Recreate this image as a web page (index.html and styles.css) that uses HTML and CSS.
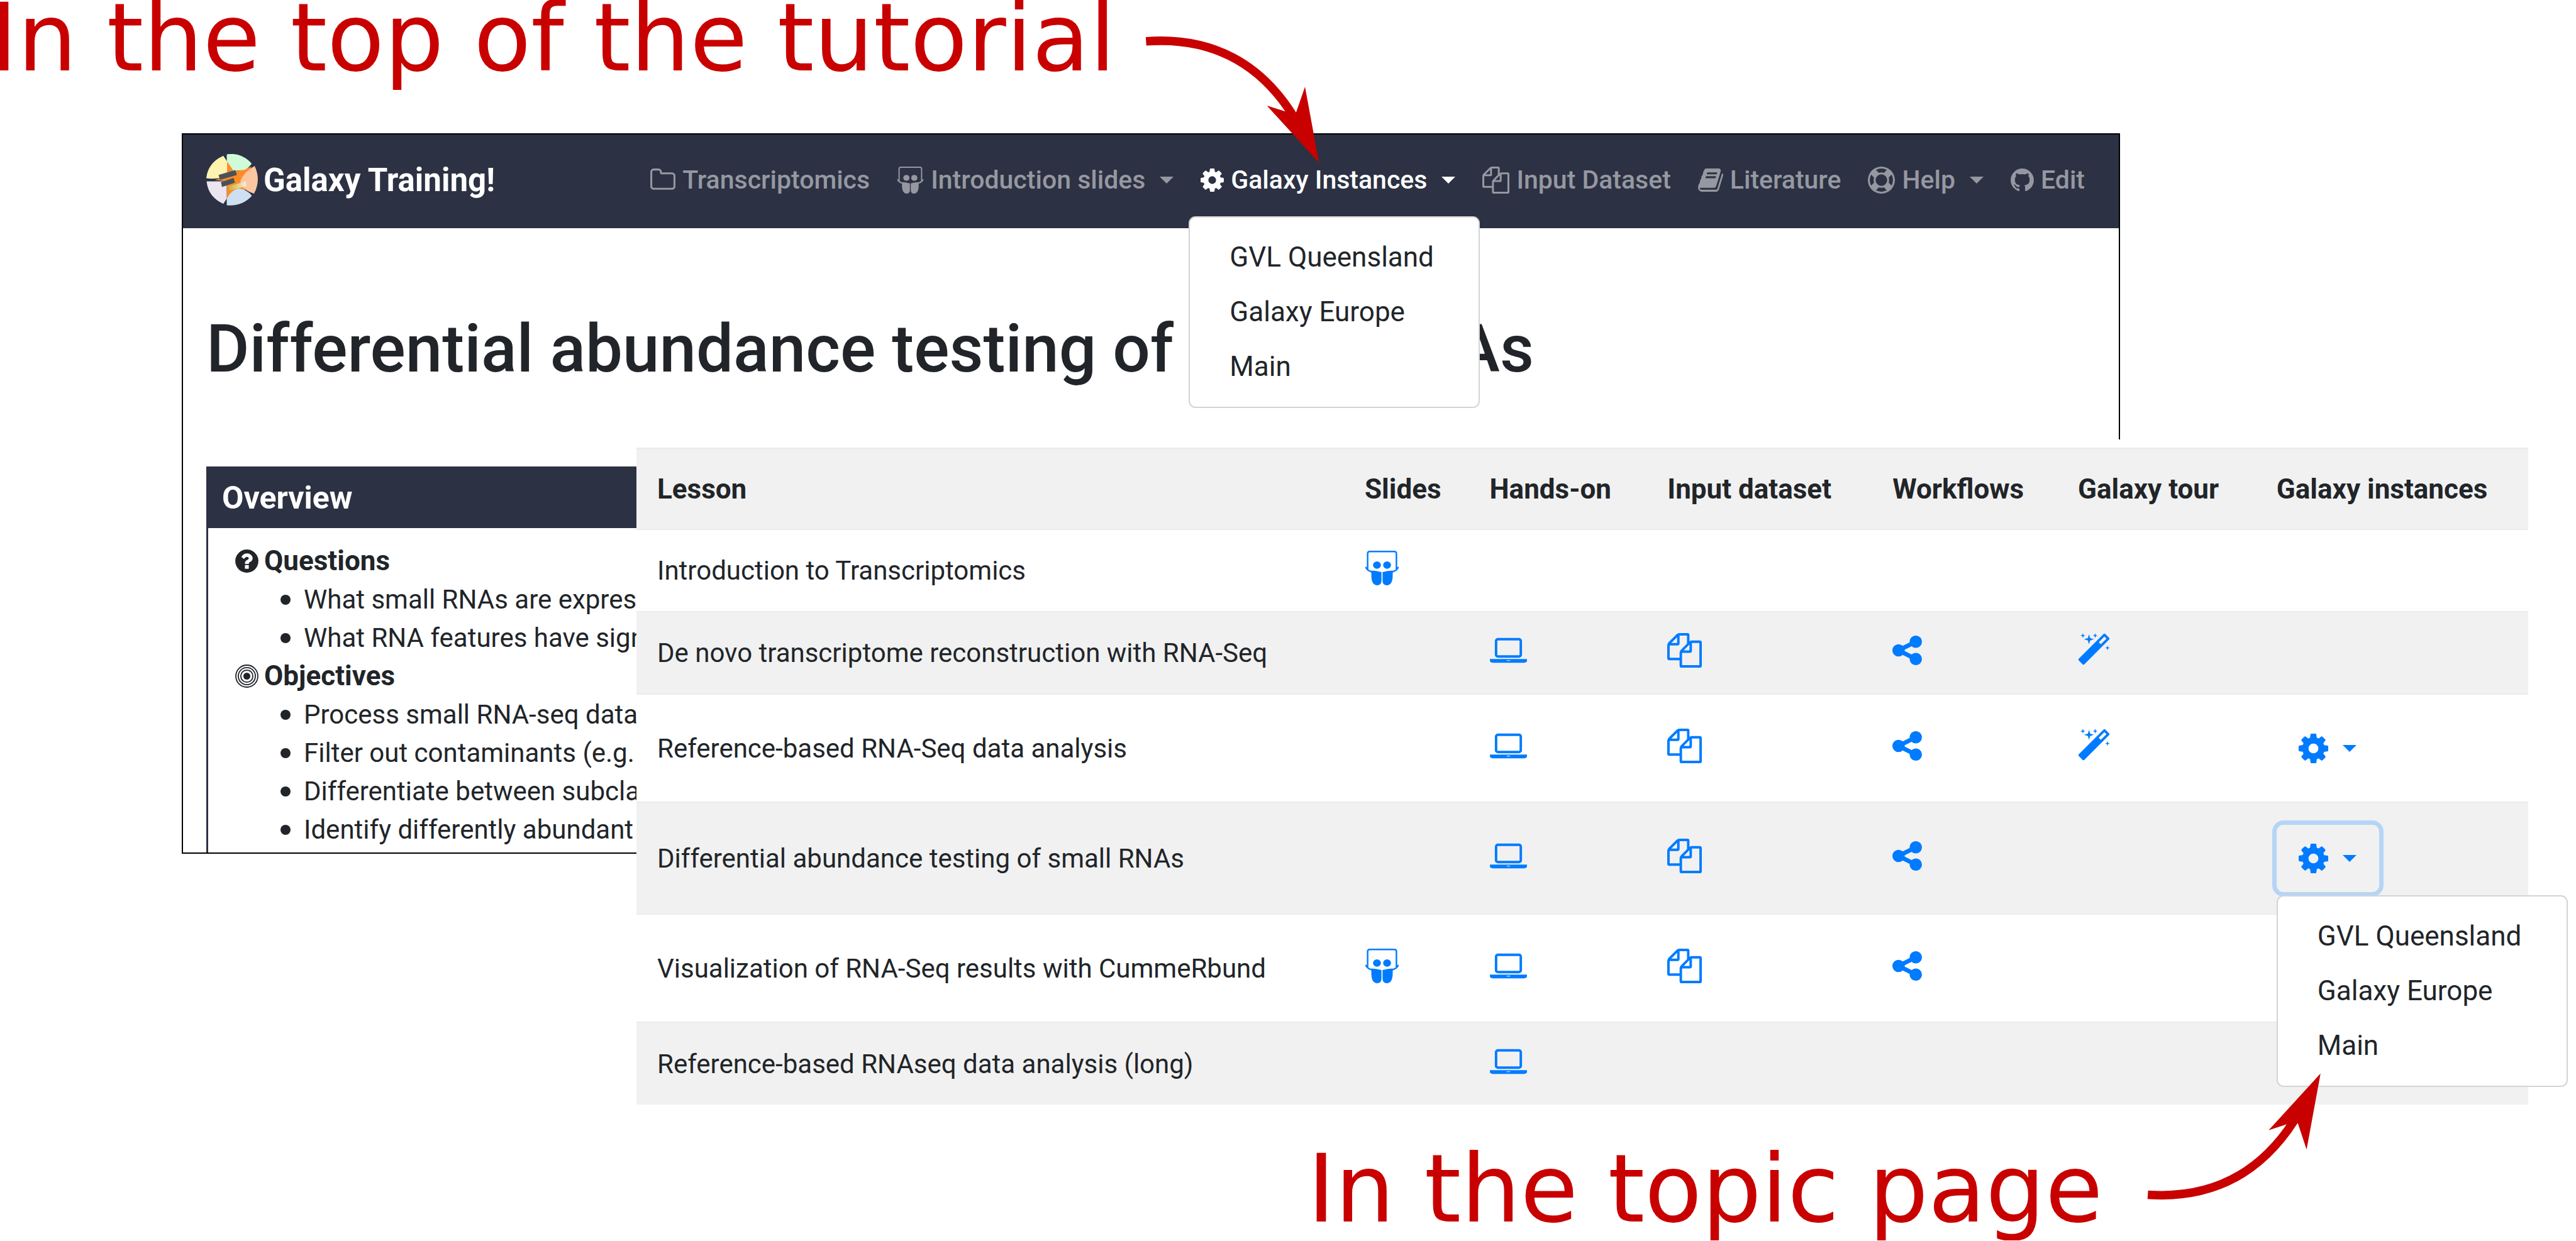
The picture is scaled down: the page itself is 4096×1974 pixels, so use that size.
FILE: index.html
```html
<!DOCTYPE html>
<html lang="en">
<head>
<meta charset="utf-8">
<title>Galaxy Training! – Galaxy instances</title>
<link rel="stylesheet" href="styles.css">
</head>
<body>
<svg class="sprite" aria-hidden="true">
  <symbol id="cog" viewBox="128 0 1536 1792"><path d="M1152 896q0-106-75-181t-181-75-181 75-75 181 75 181 181 75 181-75 75-181zm512-109v222q0 12-8 23t-20 13l-185 28q-19 54-39 91 35 50 107 138 10 12 10 25t-9 23q-27 37-99 108t-94 71q-12 0-26-9l-138-108q-44 23-91 38-16 136-29 186-7 28-36 28h-222q-14 0-24.5-8.5t-11.5-21.5l-28-184q-49-16-90-37l-141 107q-10 9-25 9-14 0-25-11-126-114-165-168-7-10-7-23 0-12 8-23 15-21 51-66.5t54-70.5q-27-50-41-99l-183-27q-13-2-21-12.5t-8-23.5v-222q0-12 8-23t19-13l186-28q14-46 39-92-40-57-107-138-10-12-10-24 0-10 9-23 26-36 98.5-107.5t94.5-71.5q13 0 26 10l138 107q44-23 91-38 16-136 29-186 7-28 36-28h222q14 0 24.5 8.5t11.5 21.5l28 184q49 16 90 37l142-107q9-9 24-9 13 0 25 10 129 119 165 170 7 8 7 22 0 12-8 23-15 21-51 66.5t-54 70.5q26 50 41 98l183 28q13 2 21 12.5t8 23.5z"/></symbol>
  <symbol id="folder" viewBox="64 0 1664 1792"><path d="M1600 1312v-704q0-40-28-68t-68-28h-704q-40 0-68-28t-28-68v-64q0-40-28-68t-68-28h-320q-40 0-68 28t-28 68v960q0 40 28 68t68 28h1216q40 0 68-28t28-68zm128-704v704q0 92-66 158t-158 66h-1216q-92 0-158-66t-66-158v-960q0-92 66-158t158-66h320q92 0 158 66t66 158v32h672q92 0 158 66t66 158z"/></symbol>
  <symbol id="files" viewBox="0 0 1792 1792"><path d="M1696 384q40 0 68 28t28 68v1216q0 40-28 68t-68 28h-960q-40 0-68-28t-28-68v-288h-544q-40 0-68-28t-28-68v-672q0-40 20-88t48-76l408-408q28-28 76-48t88-20h416q40 0 68 28t28 68v328q68-40 128-40h416zm-544 213l-299 299h299v-299zm-640-384l-299 299h299v-299zm196 647l316-316v-416h-384v416q0 40-28 68t-68 28h-416v640h512v-256q0-40 20-88t48-76zm956 804v-1152h-384v416q0 40-28 68t-68 28h-416v640h896z"/></symbol>
  <symbol id="book" viewBox="64 0 1664 1792"><path d="M1703 478q40 57 18 129l-275 906q-19 64-76.5 107.5t-122.5 43.5h-923q-77 0-148.5-53.5t-99.5-131.5q-24-67-2-127 0-4 3-27t4-37q1-8-3-21.5t-3-19.5q2-11 8-21t16.5-23.5 16.5-23.5q23-38 45-91.5t30-91.5q3-10 .5-30t-.5-28q3-11 17-28t17-23q21-36 42-92t25-90q1-9-2.5-32t.5-28q4-13 22-30.5t22-22.5q19-26 42.5-84.5t27.5-96.5q1-8-3-25.5t-2-26.5q2-8 9-18t18-23 17-21q8-12 16.5-30.5t15-35 16-36 19.5-32 26.5-23.5 36-11.5 47.5 5.5l-1 3q38-9 51-9h761q74 0 114 56t18 130l-274 906q-36 119-71.5 153.5t-128.5 34.5h-869q-27 0-38 15-11 16-1 43 24 70 144 70h923q29 0 56-15.5t35-41.5l300-987q7-22 5-57 38 15 59 43zm-1064 2q-4 13 2 22.5t20 9.5h608q13 0 25.5-9.5t16.5-22.5l21-64q4-13-2-22.5t-20-9.5h-608q-13 0-25.5 9.5t-16.5 22.5zm-83 256q-4 13 2 22.5t20 9.5h608q13 0 25.5-9.5t16.5-22.5l21-64q4-13-2-22.5t-20-9.5h-608q-13 0-25.5 9.5t-16.5 22.5z"/></symbol>
  <symbol id="ring" viewBox="0 0 1792 1792"><path fill-rule="evenodd" d="M896 0q182 0 348 71t286 191 191 286 71 348-71 348-191 286-286 191-348 71-348-71-286-191-191-286-71-348 71-348 191-286 286-191 348-71zm0 128q-190 0-361 90l194 194q82-28 167-28t167 28l194-194q-171-90-361-90zm-678 1129l194-194q-28-82-28-167t28-167l-194-194q-90 171-90 361t90 361zm678 407q190 0 361-90l-194-194q-82 28-167 28t-167-28l-194 194q171 90 361 90zm0-384q159 0 271.5-112.5t112.5-271.5-112.5-271.5-271.5-112.5-271.5 112.5-112.5 271.5 112.5 271.5 271.5 112.5zm484-217l194 194q90-171 90-361t-90-361l-194 194q28 82 28 167t-28 167z"/></symbol>
  <symbol id="github" viewBox="128 0 1536 1792"><path d="M896 128q209 0 385.5 103t279.5 279.5 103 385.5q0 251-146.5 451.5t-378.5 277.5q-27 5-40-7t-13-30q0-3 .5-76.5t.5-134.5q0-97-52-142 57-6 102.5-18t94-39 81-66.5 53-105 20.5-150.5q0-119-79-206 37-91-8-204-28-9-81 11t-92 44l-38 24q-93-26-192-26t-192 26q-16-11-42.5-27t-83.5-38.5-85-13.5q-45 113-8 204-79 87-79 206 0 85 20.5 150t52.5 105 80.5 67 94 39 102.5 18q-39 36-49 103-21 10-45 15t-57 5-65.5-21.5-55.5-62.5q-19-32-48.5-52t-49.5-24l-20-3q-21 0-29 4.5t-5 11.5 9 14 13 12l7 5q22 10 43.5 38t31.5 51l10 23q13 38 44 61.5t67 30 69.5 7 55.5-3.5l23-4q0 38 .5 88.5t.5 54.5q0 18-13 30t-40 7q-232-77-378.5-277.5t-146.5-451.5q0-209 103-385.5t279.5-279.5 385.5-103z"/></symbol>
  <symbol id="share" viewBox="128 0 1536 1792"><path d="M1344 1024q133 0 226.5 93.5t93.5 226.5-93.5 226.5-226.5 93.5-226.5-93.5-93.5-226.5q0-12 2-34l-360-180q-92 86-218 86-133 0-226.5-93.5t-93.5-226.5 93.5-226.5 226.5-93.5q126 0 218 86l360-180q-2-22-2-34 0-133 93.5-226.5t226.5-93.5 226.5 93.5 93.5 226.5-93.5 226.5-226.5 93.5q-126 0-218-86l-360 180q2 22 2 34t-2 34l360 180q92-86 218-86z"/></symbol>
  <symbol id="question" viewBox="128 0 1536 1792"><path d="M1024 1376v-192q0-14-9-23t-23-9h-192q-14 0-23 9t-9 23v192q0 14 9 23t23 9h192q14 0 23-9t9-23zm256-672q0-88-55.5-163t-138.5-116-170-41q-243 0-371 213-15 24 8 42l132 100q7 6 19 6 16 0 25-12 53-68 86-92 34-24 86-24 48 0 85.5 26t37.5 59q0 38-20 61t-68 45q-63 28-115.5 86.5t-52.5 125.5v36q0 14 9 23t23 9h192q14 0 23-9t9-23q0-19 21.5-49.5t54.5-49.5q32-18 49-28.5t46-35 44.5-48 28-60.5 12.5-81zm384 192q0 209-103 385.5t-279.5 279.5-385.5 103-385.5-103-279.5-279.5-103-385.5 103-385.5 279.5-279.5 385.5-103 385.5 103 279.5 279.5 103 385.5z"/></symbol>
  <symbol id="bullseye" viewBox="128 0 1536 1792"><circle cx="896" cy="896" r="230"/><g fill="none" stroke="currentColor" stroke-width="76"><circle cx="896" cy="896" r="400"/><circle cx="896" cy="896" r="565"/><circle cx="896" cy="896" r="728"/></g></symbol>
  <symbol id="laptop" viewBox="0 0 1920 1792"><path d="M416 1280q-66 0-113-47t-47-113v-704q0-66 47-113t113-47h1088q66 0 113 47t47 113v704q0 66-47 113t-113 47h-1088zm-32-864v704q0 13 9.500 22.500t22.500 9.500h1088q13 0 22.500-9.500t9.500-22.500v-704q0-13-9.500-22.500t-22.500-9.500h-1088q-13 0-22.500 9.500t-9.500 22.500zm1376 928h160v96q0 40-47 68t-113 28h-1600q-66 0-113-28t-47-68v-96h1760zm-720 96q16 0 16-16t-16-16h-160q-16 0-16 16t16 16h160z"/></symbol>
  <symbol id="magic" viewBox="64 0 1664 1792"><path d="M1254 581l293-293-107-107-293 293zm447-293q0 27-18 45l-1286 1286q-18 18-45 18t-45-18l-198-198q-18-18-18-45t18-45l1286-1286q18-18 45-18t45 18l198 198q18 18 18 45zm-1351-190l98 30-98 30-30 98-30-98-98-30 98-30 30-98zm350 162l196 60-196 60-60 196-60-196-196-60 196-60 60-196zm930 478l98 30-98 30-30 98-30-98-98-30 98-30 30-98zm-640-640l98 30-98 30-30 98-30-98-98-30 98-30 30-98z"/></symbol>
  <symbol id="slides" viewBox="0 0 1792 1792"><g fill="none" stroke="currentColor" stroke-width="80"><path d="M150 960V150Q150 40 260 40H1532Q1642 40 1642 150V960"/><path stroke-linecap="round" d="M64 870Q110 1020 400 1110M1392 1110Q1682 1020 1728 870"/></g><ellipse cx="634" cy="745" rx="205" ry="195"/><ellipse cx="1158" cy="745" rx="205" ry="195"/><path d="M868 1110Q600 1040 340 1030L346 1380Q380 1792 640 1792Q868 1792 868 1540ZM924 1110Q1190 1040 1452 1030L1446 1380Q1412 1792 1152 1792Q924 1792 924 1540Z"/></symbol>
</svg>

<main class="page">
  <h2 class="caption caption-top">In the top of the tutorial</h2>
  <svg class="arrow arrow-top" viewBox="0 0 1260 900" aria-hidden="true">
    <path class="shaft" d="M123 121C520 92 800 260 985 555"/>
    <path d="M1139 834L833 499L975 544L1004 540L1057 388Z"/>
  </svg>

  <section class="tutorial">
    <nav class="navbar">
      <a class="brand" href="#">
        <svg class="logo" viewBox="0 0 302 302" aria-hidden="true">
          <path fill="#ff8b28" d="M120 40L180 100L265 75L235 150L225 215L120 265L122 160L50 152L122 130Z"/>
          <path fill="#fff3b0" d="M100 10L122 44V140L70 142Q30 148 0 142Q10 50 100 10Z"/>
          <path fill="#cffbd8" d="M120 2Q205-12 266 56Q250 80 225 92Q180 98 160 100Q135 60 120 42Z"/>
          <path fill="#fcc6a0" d="M283 70Q322 150 280 232Q200 205 200 158Q215 110 283 70Z"/>
          <path fill="#ebe5f0" d="M2 160H120V260L100 292Q10 250 2 160Z"/>
          <path fill="#cfdff2" d="M120 300V262Q145 212 190 202Q240 208 267 245Q210 308 120 300Z"/>
          <path fill="#4a5257" d="M72 122L170 94L180 122L80 152ZM86 165L160 140L168 168L92 193Z"/>
          <linearGradient id="gold"><stop offset="0" stop-color="#c9b32c"/><stop offset="1" stop-color="#f6f0dc"/></linearGradient>
          <path fill="url(#gold)" d="M130 190L230 160L234 188L140 214Z"/>
        </svg>
        <span>Galaxy Training!</span>
      </a>
      <ul class="menu">
        <li><a href="#"><svg class="icon w40"><use href="#folder"/></svg>Transcriptomics</a></li>
        <li><a href="#"><svg class="icon w43"><use href="#slides"/></svg>Introduction slides<i class="caret"></i></a></li>
        <li class="open"><a href="#"><svg class="icon w37"><use href="#cog"/></svg>Galaxy Instances<i class="caret"></i></a>
          <div class="dropdown dropdown-nav">
            <a href="#">GVL Queensland</a>
            <a href="#">Galaxy Europe</a>
            <a href="#">Main</a>
          </div>
        </li>
        <li><a href="#"><svg class="icon w43"><use href="#files"/></svg>Input Dataset</a></li>
        <li><a href="#"><svg class="icon w40"><use href="#book"/></svg>Literature</a></li>
        <li><a href="#"><svg class="icon w43"><use href="#ring"/></svg>Help<i class="caret"></i></a></li>
        <li><a href="#"><svg class="icon w37"><use href="#github"/></svg>Edit</a></li>
      </ul>
    </nav>
    <div class="content">
      <h1>Differential abundance testing of small RNAs</h1>
      <div class="overview">
        <h2>Overview</h2>
        <div class="overview-body">
          <h3><svg class="icon w37"><use href="#question"/></svg>Questions</h3>
          <ul>
            <li>What small RNAs are expressed?</li>
            <li>What RNA features have significant</li>
          </ul>
          <h3><svg class="icon w37"><use href="#bullseye"/></svg>Objectives</h3>
          <ul>
            <li>Process small RNA-seq data</li>
            <li>Filter out contaminants (e.g.</li>
            <li>Differentiate between subclasses</li>
            <li>Identify differently abundant</li>
          </ul>
        </div>
      </div>
    </div>
  </section>

  <section class="topic">
    <table>
      <colgroup><col class="c-lesson"><col class="c-slides"><col class="c-hands"><col class="c-input"><col class="c-work"><col class="c-tour"><col class="c-inst"></colgroup>
      <thead>
        <tr><th>Lesson</th><th>Slides</th><th>Hands-on</th><th>Input dataset</th><th>Workflows</th><th>Galaxy tour</th><th>Galaxy instances</th></tr>
      </thead>
      <tbody>
        <tr>
          <td>Introduction to Transcriptomics</td>
          <td><a class="res" href="#" aria-label="Slides"><svg class="big b55"><use href="#slides"/></svg></a></td>
          <td></td><td></td><td></td><td></td><td></td>
        </tr>
        <tr>
          <td>De novo transcriptome reconstruction with RNA-Seq</td>
          <td></td>
          <td><a class="res" href="#" aria-label="Hands-on"><svg class="big b59"><use href="#laptop"/></svg></a></td>
          <td><a class="res" href="#" aria-label="Input dataset"><svg class="big b55"><use href="#files"/></svg></a></td>
          <td><a class="res" href="#" aria-label="Workflows"><svg class="big b47"><use href="#share"/></svg></a></td>
          <td><a class="res" href="#" aria-label="Galaxy tour"><svg class="big b51"><use href="#magic"/></svg></a></td>
          <td></td>
        </tr>
        <tr class="tall">
          <td>Reference-based RNA-Seq data analysis</td>
          <td></td>
          <td><a class="res" href="#" aria-label="Hands-on"><svg class="big b59"><use href="#laptop"/></svg></a></td>
          <td><a class="res" href="#" aria-label="Input dataset"><svg class="big b55"><use href="#files"/></svg></a></td>
          <td><a class="res" href="#" aria-label="Workflows"><svg class="big b47"><use href="#share"/></svg></a></td>
          <td><a class="res" href="#" aria-label="Galaxy tour"><svg class="big b51"><use href="#magic"/></svg></a></td>
          <td><button class="btn" type="button" aria-label="Galaxy instances"><svg class="big b47"><use href="#cog"/></svg><i class="caret"></i></button></td>
        </tr>
        <tr class="tall active">
          <td>Differential abundance testing of small RNAs</td>
          <td></td>
          <td><a class="res" href="#" aria-label="Hands-on"><svg class="big b59"><use href="#laptop"/></svg></a></td>
          <td><a class="res" href="#" aria-label="Input dataset"><svg class="big b55"><use href="#files"/></svg></a></td>
          <td><a class="res" href="#" aria-label="Workflows"><svg class="big b47"><use href="#share"/></svg></a></td>
          <td></td>
          <td>
            <div class="picker">
              <button class="btn focused" type="button" aria-label="Galaxy instances"><svg class="big b47"><use href="#cog"/></svg><i class="caret"></i></button>
              <div class="dropdown dropdown-cell">
                <a href="#">GVL Queensland</a>
                <a href="#">Galaxy Europe</a>
                <a href="#">Main</a>
              </div>
            </div>
          </td>
        </tr>
        <tr class="tall">
          <td>Visualization of RNA-Seq results with CummeRbund</td>
          <td><a class="res" href="#" aria-label="Slides"><svg class="big b55"><use href="#slides"/></svg></a></td>
          <td><a class="res" href="#" aria-label="Hands-on"><svg class="big b59"><use href="#laptop"/></svg></a></td>
          <td><a class="res" href="#" aria-label="Input dataset"><svg class="big b55"><use href="#files"/></svg></a></td>
          <td><a class="res" href="#" aria-label="Workflows"><svg class="big b47"><use href="#share"/></svg></a></td>
          <td></td><td></td>
        </tr>
        <tr>
          <td>Reference-based RNAseq data analysis (long)</td>
          <td></td>
          <td><a class="res" href="#" aria-label="Hands-on"><svg class="big b59"><use href="#laptop"/></svg></a></td>
          <td></td><td></td><td></td><td></td>
        </tr>
      </tbody>
    </table>
  </section>

  <div class="footer">
    <h2 class="caption caption-bottom">In the topic page</h2>
    <svg class="arrow arrow-bottom" viewBox="0 0 1260 1044" aria-hidden="true">
      <path class="shaft" d="M152 770C550 798 825 625 1012 335"/>
      <path d="M1167 57L862 391L1004 345L1034 351L1085 504Z"/>
    </svg>
  </div>
</main>
</body>
</html>
```
FILE: styles.css
```css
* { box-sizing: border-box; }

body {
  margin: 0;
  background: #fff;
  color: #212529;
  font-family: Roboto, "Liberation Sans", sans-serif;
  font-size: 42px;
  overflow-x: hidden;
}

h1, h2, h3, ul { margin: 0; padding: 0; }
ul { list-style: none; }
a { color: inherit; text-decoration: none; }
svg { display: block; flex: none; fill: currentColor; }
.sprite { position: absolute; width: 0; height: 0; }

.page { position: relative; overflow: hidden; }

/* Red annotations */
.caption {
  color: #c80000;
  font-family: "DejaVu Sans", sans-serif;
  font-size: 149px;
  font-weight: 400;
  line-height: 122px;
  white-space: nowrap;
}
.caption-top { margin: 0 0 90px -16px; }
.footer { position: relative; padding: 74px 0 20px; }
.caption-bottom { margin-left: 2079px; }
.arrow { position: absolute; z-index: 5; width: 341px; color: #c80000; }
.arrow .shaft { fill: none; stroke: currentColor; stroke-width: 50; }
.arrow-top { left: 1789px; top: 33px; }
.arrow-bottom { left: 3374px; top: -65px; }

/* Tutorial window */
.tutorial {
  margin: 0 725px 0 289px;
  border: 2px solid #000;
}
.navbar {
  display: flex;
  justify-content: space-between;
  align-items: center;
  height: 149px;
  padding: 0 54px 5px 37px;
  background: #2c3143;
  color: #9698a1;
}
.brand {
  display: flex;
  align-items: center;
  gap: 9px;
  color: #fff;
  font-size: 51px;
  font-weight: 700;
}
.logo { width: 82px; height: 82px; }
.menu { display: flex; gap: 43px; font-size: 41px; font-weight: 500; }
.menu li { position: relative; }
.menu li > a { display: flex; align-items: center; line-height: 64px; white-space: nowrap; }
.menu .open > a { color: #fff; }
.icon { height: 43px; margin-right: 11px; }
.w37 { width: 37px; }
.w40 { width: 40px; }
.w43 { width: 43px; }
.caret {
  margin-left: 23px;
  border: 11px solid transparent;
  border-top-color: currentColor;
  border-bottom: 0;
}

.dropdown {
  position: absolute;
  z-index: 3;
  width: 463px;
  padding: 20px 0;
  border: 2px solid #d4d4d4;
  border-radius: 11px;
  background: #fff;
  color: #212529;
  font-size: 44px;
  font-weight: 400;
}
.dropdown a { display: block; padding: 0 63px; line-height: 87px; white-space: nowrap; }
.dropdown-nav { left: -19px; top: 90px; }
.dropdown-cell { left: 0; top: 112px; }

.content { padding: 128px 37px 0; }
h1 { font-size: 105px; font-weight: 500; line-height: 130px; white-space: nowrap; }

.overview {
  margin-top: 121px;
  border: 3px solid #2c3143;
  border-bottom: 0;
}
.overview h2 {
  padding: 0 22px;
  background: #2c3143;
  color: #fff;
  font-size: 50px;
  font-weight: 700;
  line-height: 95px;
}
.overview-body { padding: 22px 43px 6px; line-height: 61px; }
.overview h3 {
  display: flex;
  align-items: center;
  font-size: 44px;
  font-weight: 700;
}
.overview h3 .icon { margin-right: 9px; }
.overview ul { padding-left: 72px; }
.overview li { display: flex; align-items: center; gap: 21px; white-space: nowrap; }
.overview li::before {
  content: "";
  width: 16px;
  height: 16px;
  border-radius: 50%;
  background: currentColor;
}

/* Topic table */
.topic {
  position: relative;
  margin: -659px 0 0 1012px;
  padding: 13px 76px 0 0;
  background: #fff;
}
table { width: 100%; table-layout: fixed; border-collapse: collapse; }
.c-lesson { width: 37.4%; }
.c-slides { width: 6.6%; }
.c-hands { width: 9.4%; }
.c-input { width: 11.9%; }
.c-work { width: 9.8%; }
.c-tour { width: 10.5%; }
.c-inst { width: 14.4%; }
th, td {
  height: 131px;
  padding: 0 0 0 33px;
  border-top: 2px solid #e9ecef;
  text-align: left;
  vertical-align: middle;
  white-space: nowrap;
}
th { height: 129px; font-size: 44px; font-weight: 700; }
.tall td { height: 172px; }
.active td { height: 178px; }
thead tr, tbody tr:nth-child(even) { background: #f1f1f1; }
.res { display: block; padding-bottom: 8px; color: #007bff; }
.big { height: 55px; }
.b47 { width: 47px; }
.b51 { width: 51px; }
.b55 { width: 55px; }
.b59 { width: 59px; }

.picker { position: relative; }
.btn {
  display: flex;
  align-items: center;
  width: 163px;
  height: 107px;
  padding: 0 35px;
  border: 0;
  border-radius: 11px;
  background: transparent;
  color: #007bff;
}
.btn.focused { box-shadow: 0 0 0 7px #b5d5f6; }
```
